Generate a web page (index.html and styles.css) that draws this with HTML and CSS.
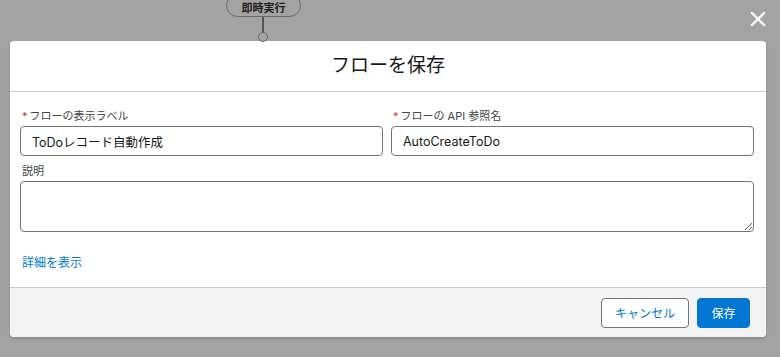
FILE: index.html
```html
<!DOCTYPE html>
<html>
<head>
  <meta charset="utf-8">
  <title>フローを保存</title>
  <link rel="stylesheet" href="styles.css">
</head>
<body>
  <div class="canvas">
    <div class="node-pill">即時実行</div>
    <div class="node-line"></div>
    <div class="node-dot"></div>
  </div>

  <button class="close-btn" aria-label="閉じる">
    <svg width="16" height="16" viewBox="0 0 16 16">
      <path d="M2 2 L14 14 M14 2 L2 14" stroke="#fff" stroke-width="2.4" stroke-linecap="round"/>
    </svg>
  </button>

  <div class="modal">
    <div class="modal-header">フローを保存</div>
    <div class="modal-body">
      <div class="row">
        <div class="field">
          <label class="field-label"><span class="req">*</span>フローの表示ラベル</label>
          <input class="text-input" type="text" value="ToDoレコード自動作成">
        </div>
        <div class="field">
          <label class="field-label"><span class="req">*</span>フローの API 参照名</label>
          <input class="text-input" type="text" value="AutoCreateToDo">
        </div>
      </div>
      <div class="field full">
        <label class="field-label">説明</label>
        <textarea class="text-area"></textarea>
      </div>
      <a class="more-link" href="#">詳細を表示</a>
    </div>
    <div class="modal-footer">
      <button class="btn btn-neutral">キャンセル</button>
      <button class="btn btn-brand">保存</button>
    </div>
  </div>
</body>
</html>
```

FILE: styles.css
```css
* { margin: 0; padding: 0; box-sizing: border-box; }

body {
  font-family: "Inter", "Noto Sans CJK JP", sans-serif;
  background-color: #a3a3a3;
  width: 780px;
  height: 357px;
  overflow: hidden;
  position: relative;
  padding-top: 41px;
  padding-left: 10px;
}

/* flow canvas behind the overlay */
.canvas {
  position: absolute;
  top: 0;
  left: 0;
  width: 100%;
  height: 41px;
}
.node-pill {
  position: absolute;
  left: 226px;
  top: -6px;
  width: 75px;
  height: 23px;
  border: 1px solid #6b6b6b;
  border-radius: 12px;
  background: #a3a3a3;
  font-size: 11px;
  font-weight: 700;
  color: #222;
  text-align: center;
  line-height: 26px;
}
.node-line {
  position: absolute;
  left: 262px;
  top: 17px;
  width: 2px;
  height: 15px;
  background: #555;
}
.node-dot {
  position: absolute;
  left: 258px;
  top: 32px;
  width: 10px;
  height: 10px;
  border: 1px solid #666;
  border-radius: 50%;
}

.close-btn {
  position: absolute;
  top: 11px;
  right: 14px;
  background: none;
  border: none;
  width: 16px;
  height: 16px;
  cursor: pointer;
}

.modal {
  width: 756px;
  background: #fff;
  border-radius: 4px;
  overflow: hidden;
  box-shadow: 0 2px 3px rgba(0, 0, 0, 0.16);
}

.modal-header {
  height: 51px;
  border-bottom: 1px solid #c9c9c9;
  text-align: center;
  font-size: 19px;
  line-height: 50px;
  color: #181818;
}

.modal-body {
  height: 195px;
  padding: 17px 12px 0 10px;
}

.row {
  display: flex;
  gap: 8px;
}
.field {
  flex: 1;
}
.field.full {
  margin-top: 8px;
}

.field-label {
  display: block;
  font-size: 11px;
  color: #444;
  line-height: 14px;
  margin-bottom: 3px;
  padding-left: 2px;
}
.req {
  color: #c23934;
  margin-right: 2px;
}

.text-input {
  width: 100%;
  height: 30px;
  border: 1px solid #747474;
  border-radius: 4px;
  padding: 0 11px;
  font-family: inherit;
  font-size: 12.5px;
  color: #181818;
}

.text-area {
  display: block;
  width: 100%;
  height: 51px;
  border: 1px solid #747474;
  border-radius: 4px;
  font-family: inherit;
  resize: vertical;
}

.more-link {
  display: inline-block;
  margin-top: 21px;
  margin-left: 2px;
  font-size: 12px;
  color: #0176d3;
  text-decoration: none;
}

.modal-footer {
  height: 50px;
  background: #f3f3f3;
  border-top: 1px solid #c9c9c9;
  display: flex;
  justify-content: flex-end;
  align-items: center;
  gap: 8px;
  padding-right: 16px;
}

.btn {
  height: 30px;
  border-radius: 4px;
  font-family: inherit;
  font-size: 12px;
  white-space: nowrap;
  cursor: pointer;
}
.btn-neutral {
  width: 88px;
  background: #fff;
  border: 1px solid #747474;
  color: #0176d3;
}
.btn-brand {
  width: 53px;
  background: #0176d3;
  border: 1px solid #0176d3;
  color: #fff;
}
```
